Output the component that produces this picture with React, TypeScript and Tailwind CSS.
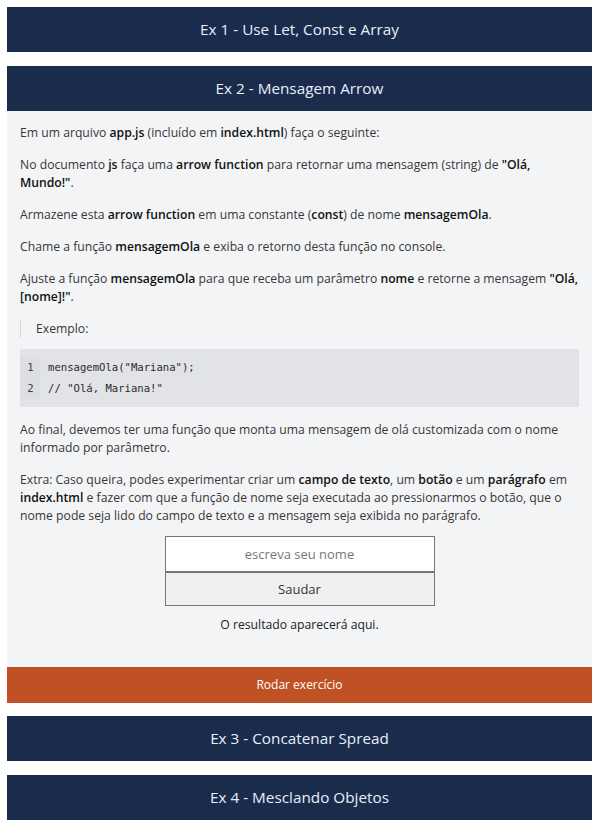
import React, { useState } from "react";

const font = { fontFamily: "'Open Sans', 'Liberation Sans', sans-serif" };

const Header = ({ title }: { title: string }) => (
  <div className="flex h-[45px] items-center justify-center bg-[#1a2b4c] text-[15.3px] text-[#e8eefa]">
    {title}
  </div>
);

const App = () => {
  const [nome, setNome] = useState("");
  const [resultado, setResultado] = useState("O resultado aparecerá aqui.");

  const mensagemOla = (n: string) => `Olá, ${n}!`;

  return (
    <div
      className="flex w-[585px] flex-col gap-[14px] pl-[7px] pt-[7px] box-content"
      style={font}
    >
      <Header title="Ex 1 - Use Let, Const e Array" />

      <div className="mb-[-1px] flex flex-col">
        <Header title="Ex 2 - Mensagem Arrow" />
        <div className="flex flex-col gap-[14px] bg-[#f3f4f6] px-[13px] pb-[33px] pt-[13px] text-[12.2px] leading-[18px] text-[#3a3636]">
          <p>
            Em um arquivo <b className="font-semibold text-[#111]">app.js</b> (incluído em{" "}
            <b className="font-semibold text-[#111]">index.html</b>) faça o seguinte:
          </p>
          <p>
            No documento <b className="font-semibold text-[#111]">js</b> faça uma{" "}
            <b className="font-semibold text-[#111]">arrow function</b> para retornar uma mensagem
            (string) de <b className="font-semibold text-[#111]">"Olá, Mundo!"</b>.
          </p>
          <p>
            Armazene esta <b className="font-semibold text-[#111]">arrow function</b> em uma
            constante (<b className="font-semibold text-[#111]">const</b>) de nome{" "}
            <b className="font-semibold text-[#111]">mensagemOla</b>.
          </p>
          <p>
            Chame a função <b className="font-semibold text-[#111]">mensagemOla</b> e exiba o
            retorno desta função no console.
          </p>
          <p>
            Ajuste a função <b className="font-semibold text-[#111]">mensagemOla</b> para que receba
            um parâmetro <b className="font-semibold text-[#111]">nome</b> e retorne a mensagem{" "}
            <b className="font-semibold text-[#111]">"Olá, [nome]!"</b>.
          </p>

          <blockquote className="border-l border-[#d4d6da] pl-[15px]">Exemplo:</blockquote>

          <div
            className="mt-[-3px] flex bg-[#e2e3e7] py-2 text-[10.6px] leading-[21px] text-[#2a2a2a]"
            style={{ fontFamily: "'DejaVu Sans Mono', 'Liberation Mono', monospace" }}
          >
            <div className="flex w-[20px] flex-col items-center bg-[#dddee2] pl-[1px] text-[#444]">
              <span>1</span>
              <span>2</span>
            </div>
            <div className="flex flex-col pl-[8px]">
              <span>mensagemOla("Mariana");</span>
              <span>// "Olá, Mariana!"</span>
            </div>
          </div>

          <p>
            Ao final, devemos ter uma função que monta uma mensagem de olá customizada com o nome
            informado por parâmetro.
          </p>
          <p>
            Extra: Caso queira, podes experimentar criar um{" "}
            <b className="font-semibold text-[#111]">campo de texto</b>, um{" "}
            <b className="font-semibold text-[#111]">botão</b> e um{" "}
            <b className="font-semibold text-[#111]">parágrafo</b> em{" "}
            <b className="font-semibold text-[#111]">index.html</b> e fazer com que a função de nome
            seja executada ao pressionarmos o botão, que o nome pode seja lido do campo de texto e a
            mensagem seja exibida no parágrafo.
          </p>

          <div className="mt-[-3px] flex flex-col items-center">
            <input
              value={nome}
              onChange={(e) => setNome(e.target.value)}
              placeholder="escreva seu nome"
              className="h-[36px] w-[270px] border border-[#767676] bg-white text-center text-[13px] text-[#333] placeholder:text-[#777] outline-none"
            />
            <button
              onClick={() => setResultado(mensagemOla(nome))}
              className="h-[34px] w-[270px] border border-[#767676] bg-[#efefef] text-[13px] text-[#333]"
            >
              Saudar
            </button>
            <p className="mt-[10px] text-[12.2px] text-[#222]">{resultado}</p>
          </div>
        </div>
        <button className="h-[36px] w-full bg-[#bf5124] text-[12px] text-white">
          Rodar exercício
        </button>
      </div>

      <Header title="Ex 3 - Concatenar Spread" />
      <Header title="Ex 4 - Mesclando Objetos" />
    </div>
  );
};

export default App;
